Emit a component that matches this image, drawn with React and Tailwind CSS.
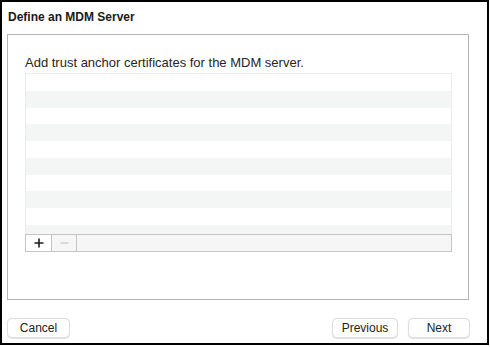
import React from "react";

const rows = Array.from({ length: 10 });

function Button({ label, className }) {
  return (
    <button
      className={
        "h-[20px] rounded-[5px] border border-[#dedede] bg-white text-[12px] text-[#222] shadow-[0_0.5px_1px_rgba(0,0,0,0.12)] " +
        className
      }
    >
      {label}
    </button>
  );
}

export default function App() {
  return (
    <div
      className="w-[490px] h-[347px] bg-white"
      style={{ fontFamily: '"Liberation Sans", Arial, sans-serif' }}
    >
      <div className="w-[489px] h-[345px] border-2 border-black flex flex-col">
        {/* title */}
        <h1 className="pl-[6px] pt-[8px] h-[32px] text-[12px] font-bold text-[#1a1a1a] leading-[14px]">
          Define an MDM Server
        </h1>

        {/* panel */}
        <div className="ml-[5px] w-[462px] h-[266px] border border-[#b4b4b4] flex flex-col">
          <p className="pl-[17px] pt-[21px] text-[13px] leading-[14px] text-[#262626]">
            Add trust anchor certificates for the MDM server.
          </p>

          <div className="ml-[17px] mt-[3px] w-[427px] flex flex-col">
            <div className="h-[161px] border border-b-0 border-[#ebebeb] overflow-hidden">
              {rows.map((_, i) => (
                <div
                  key={i}
                  className={
                    i % 2 === 0
                      ? "h-[16.75px] bg-white"
                      : "h-[16.75px] bg-[#f4f5f5]"
                  }
                />
              ))}
            </div>
            <div className="h-[18px] flex border border-[#c4c4c4] bg-[#f6f6f6]">
              <div className="w-[26px] flex items-center justify-center border-r border-[#c4c4c4] bg-white">
                <svg width="10" height="10" viewBox="0 0 10 10">
                  <path d="M5 0.5V9.5M0.5 5H9.5" stroke="#1e1e1e" strokeWidth="1.6" />
                </svg>
              </div>
              <div className="w-[25px] flex items-center justify-center border-r border-[#c4c4c4]">
                <svg width="9" height="10" viewBox="0 0 9 10">
                  <path d="M0.5 5H8.5" stroke="#c8c8c8" strokeWidth="1.2" />
                </svg>
              </div>
              <div className="flex-1" />
            </div>
          </div>
        </div>

        {/* footer */}
        <div className="flex items-center mt-[18px] pl-[5px] pr-[17px]">
          <Button label="Cancel" className="w-[63px]" />
          <div className="flex-1" />
          <Button label="Previous" className="w-[66px]" />
          <Button label="Next" className="w-[62px] ml-[10px]" />
        </div>
      </div>
    </div>
  );
}
